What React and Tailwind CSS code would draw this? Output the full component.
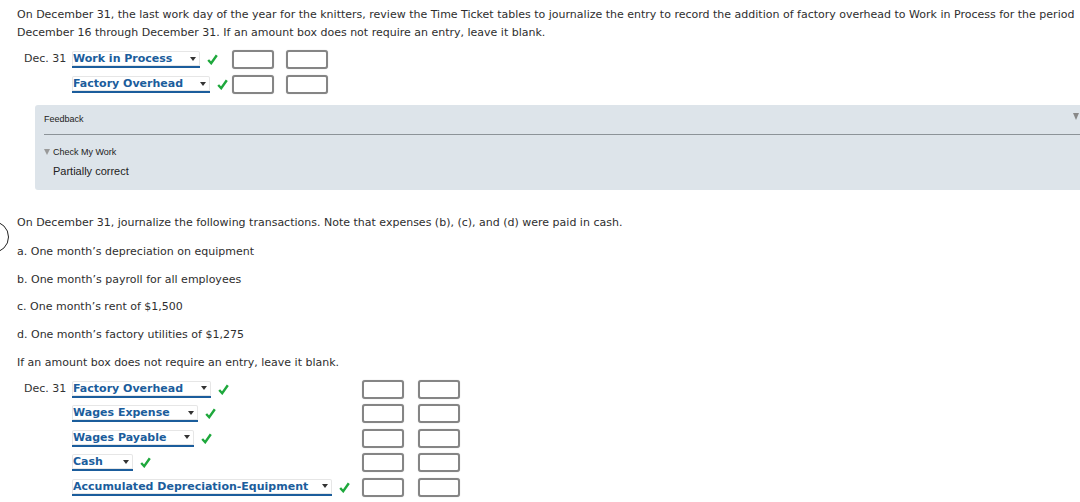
import React from 'react';

const Check = () => (
  <svg width="11" height="11" viewBox="0 0 11 11" className="shrink-0">
    <path d="M1.2 6 L4.2 9.2 L9.8 1.2" fill="none" stroke="#1ea83c" strokeWidth="2.4" strokeLinejoin="miter" />
  </svg>
);

const Select = ({ label, width }) => (
  <div
    className="relative shrink-0 flex items-center h-[17px] border-b-2 border-[#1b5d9c] rounded-t-[2px] bg-white text-[#1b5d9c] font-bold text-[11px] leading-none pl-[1px] shadow-[0_0_0_1px_#e6e6e6_inset]"
    style={{ width }}
  >
    <span>{label}</span>
    <span className="absolute right-[3px] top-[4px] w-[8px] h-[7px] flex items-center justify-center">
      <svg width="6" height="4" viewBox="0 0 6 4">
        <path d="M0 0 L6 0 L3 4 Z" fill="#333" />
      </svg>
    </span>
  </div>
);

const Box = () => (
  <div className="shrink-0 w-[42px] h-[19px] border-2 border-[#858585] rounded-[3px] bg-white shadow-[0_0_1px_#bbb]" />
);

const Row = ({ date, label, width, cell, gap, h }) => (
  <div className={`flex items-center ${h}`}>
    <div className="w-[48px] pl-[24px] box-content text-[11px] text-[#333] whitespace-nowrap">{date}</div>
    <div className={`flex items-center gap-[7px] shrink-0 ${cell}`}>
      <Select label={label} width={width} />
      <Check />
    </div>
    <div className={`flex items-center ${gap}`}>
      <Box />
      <Box />
    </div>
  </div>
);

export default function App() {
  return (
    <div className="relative w-[1080px] h-[502px] overflow-hidden bg-white font-['DejaVu_Sans','Verdana',sans-serif] text-[11px] text-[#2e2e2e]">
      {/* Intro */}
      <p className="pl-[17px] pt-[6px] leading-[18px] whitespace-nowrap">
        On December 31, the last work day of the year for the knitters, review the Time Ticket tables to journalize the entry to record the addition of factory overhead to Work in Process for the period
        <br />
        December 16 through December 31. If an amount box does not require an entry, leave it blank.
      </p>

      <div className="mt-[5px]">
        <Row date="Dec. 31" label="Work in Process" width="128px" cell="w-[160px]" gap="gap-[12px]" h="h-[25px]" />
        <Row date="" label="Factory Overhead" width="138px" cell="w-[160px]" gap="gap-[12px]" h="h-[25px]" />
      </div>

      {/* Feedback */}
      <div className="relative ml-[35px] mt-[8px] w-[1060px] h-[85px] bg-[#dde4ea] rounded-[3px] font-['Liberation_Sans','Arial',sans-serif] text-[#222] pt-[8px] pl-[9px]">
        <div className="text-[9px] leading-[12px]">Feedback</div>
        <div className="absolute right-[16px] top-[8px] w-0 h-0 border-l-[3px] border-r-[3px] border-t-[7px] border-l-transparent border-r-transparent border-t-[#888]" />
        <div className="mt-[9px] h-[1px] bg-[#8c9398]" />
        <div className="mt-[11px] flex items-center text-[9px] leading-[12px]">
          <span className="w-0 h-0 border-l-[3px] border-r-[3px] border-t-[6px] border-l-transparent border-r-transparent border-t-[#999] mr-[3px]" />
          Check My Work
        </div>
        <div className="pl-[9px] mt-[6px] text-[11px] leading-[14px]">Partially correct</div>
      </div>

      {/* Step circle */}
      <div className="absolute left-[-23px] top-[221px] w-[32px] h-[32px] rounded-full border-[1.5px] border-[#222]" />

      <div className="pl-[17px] leading-[18px]">
        <p className="mt-[24px]">On December 31, journalize the following transactions. Note that expenses (b), (c), and (d) were paid in cash.</p>
        <p className="mt-[11px]">a. One month’s depreciation on equipment</p>
        <p className="mt-[10px]">b. One month’s payroll for all employees</p>
        <p className="mt-[9px]">c. One month’s rent of $1,500</p>
        <p className="mt-[10px]">d. One month’s factory utilities of $1,275</p>
        <p className="mt-[10px]">If an amount box does not require an entry, leave it blank.</p>
      </div>

      <div className="mt-[5px]">
        <Row date="Dec. 31" label="Factory Overhead" width="139px" cell="w-[290px]" gap="gap-[14px]" h="h-[24.5px]" />
        <Row date="" label="Wages Expense" width="126px" cell="w-[290px]" gap="gap-[14px]" h="h-[24.5px]" />
        <Row date="" label="Wages Payable" width="122px" cell="w-[290px]" gap="gap-[14px]" h="h-[24.5px]" />
        <Row date="" label="Cash" width="61px" cell="w-[290px]" gap="gap-[14px]" h="h-[24.5px]" />
        <Row date="" label="Accumulated Depreciation-Equipment" width="260px" cell="w-[290px]" gap="gap-[14px]" h="h-[24.5px]" />
      </div>
    </div>
  );
}
